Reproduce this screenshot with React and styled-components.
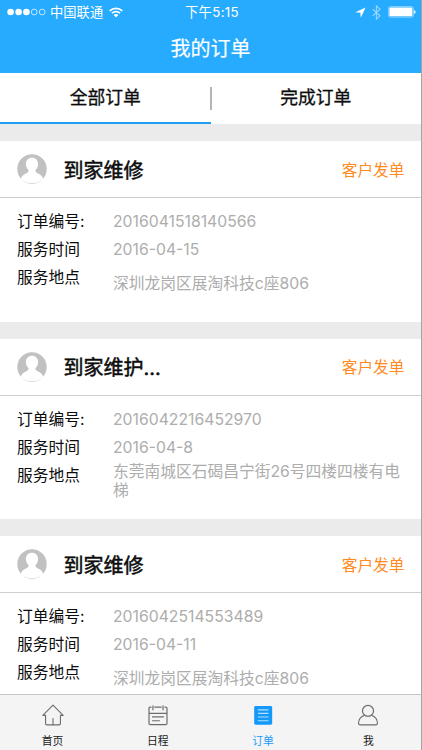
import React from "react";
import styled, { createGlobalStyle } from "styled-components";

const GlobalStyle = createGlobalStyle`
  * {
    box-sizing: border-box;
  }
  body {
    margin: 0;
    overflow: hidden;
    font-family: Inter, "Noto Sans CJK SC", sans-serif;
    color: #0c0c0c;
    background-color: #ebebeb;
  }
`;

const Screen = styled.div`
  display: flex;
  flex-direction: column;
  width: 422px;
  height: 750px;
  overflow: hidden;
  background-color: #ebebeb;
  box-shadow: inset -1px 0 0 #a5a5a5;
`;

const Header = styled.header`
  flex: none;
  width: 421px;
  height: 72.5px;
  color: white;
  background-color: #26abff;
`;

const StatusBar = styled.div`
  display: grid;
  grid-template-columns: 1fr auto 1fr;
  align-items: center;
  height: 24px;
  padding: 0 5px 0 7px;
  font-size: 13.3px;
  line-height: 24px;
`;

const Carrier = styled.div`
  display: flex;
  align-items: center;
`;

const CarrierName = styled.span`
  margin: 0 6px 0 4px;
`;

const Time = styled.span`
  padding-left: 1px;
  letter-spacing: 0.35px;
`;

const Indicators = styled.div`
  display: flex;
  justify-content: flex-end;
  align-items: center;
`;

const PageTitle = styled.h1`
  margin: 0;
  font-size: 20px;
  font-weight: 400;
  line-height: 50px;
  text-align: center;
  -webkit-text-stroke: 0.2px white;
`;

const Tabs = styled.nav`
  display: flex;
  flex: none;
  align-items: center;
  width: 421px;
  height: 51.5px;
  background-color: white;
`;

const Tab = styled.div`
  flex: 1;
  height: 100%;
  border-bottom: 2px solid ${(props) => (props.$active ? "#1f9ef0" : "white")};
  font-size: 17.8px;
  line-height: 49px;
  text-align: center;
  -webkit-text-stroke: 0.3px #0c0c0c;
`;

const TabDivider = styled.span`
  width: 2px;
  height: 23px;
  margin: 0 -1px;
  background-color: #b4b4b4;
`;

const List = styled.main`
  display: flex;
  flex: 1;
  flex-direction: column;
  gap: 17px;
  width: 421px;
  min-height: 0;
  padding-top: 17px;
  overflow: hidden;
`;

const Card = styled.section`
  flex: none;
  height: 180.6px;
  background-color: white;
`;

const CardHeader = styled.div`
  display: flex;
  align-items: center;
  height: 57px;
  padding: 0 16.5px 0 17px;
  border-bottom: 1px solid #cfcfcf;
`;

const CardTitle = styled.h2`
  flex: 1;
  margin: 0 0 0 16.5px;
  font-size: 20px;
  font-weight: 400;
  -webkit-text-stroke: 0.5px #0c0c0c;
`;

const Status = styled.span`
  font-size: 15.7px;
  color: #ff8a1e;
`;

const Fields = styled.div`
  display: grid;
  grid-template-columns: 96px 1fr;
  grid-template-rows: 28px 28px 40px;
  padding: 10px 16px 0 17px;
  font-size: 15.75px;
  line-height: 28px;
`;

const Label = styled.span``;

const Value = styled.span`
  color: #adadad;
`;

const Address = styled.span`
  align-self: center;
  line-height: 18.7px;
  color: #adadad;
`;

const TabBar = styled.footer`
  display: flex;
  flex: none;
  width: 421px;
  height: 56px;
  border-top: 1px solid #c6c6c6;
  background-color: #f4f4f4;
`;

const TabBarItem = styled.div`
  display: flex;
  flex: 1;
  flex-direction: column;
  align-items: center;
  gap: 8px;
  padding-top: 9px;
  font-size: 10.8px;
  line-height: 16px;
  color: ${(props) => (props.$active ? "#1a9dfa" : "#222")};
`;

const SignalDots = () => (
  <svg width="39" height="8" viewBox="0 0 39 8" fill="white">
    <circle cx="3.6" cy="4" r="3.3" />
    <circle cx="11.6" cy="4" r="3.3" />
    <circle cx="19.4" cy="4" r="3.3" />
    <g fill="none" stroke="white" strokeWidth="0.7">
      <circle cx="27.2" cy="4" r="2.9" />
      <circle cx="35.2" cy="4" r="2.9" />
    </g>
  </svg>
);

const WifiIcon = () => (
  <svg width="14" height="11" viewBox="0 0 14 11">
    <g fill="none" stroke="white" strokeWidth="1.6">
      <path d="M0.7 3.9a9 9 0 0 1 12.6 0" />
      <path d="M2.9 6.3a5.8 5.8 0 0 1 8.2 0" />
    </g>
    <path d="M4.6 8.1a3.4 3.4 0 0 1 4.8 0L7 10.6z" fill="white" />
  </svg>
);

const LocationIcon = () => (
  <svg width="11" height="11" viewBox="0 0 11 11" fill="white">
    <path d="M10.6 0.4L0.4 5.3l5 0.4 0.4 5z" />
  </svg>
);

const Bluetooth = styled.svg`
  margin: 0 7px 0 6px;
`;

const BluetoothIcon = () => (
  <Bluetooth
    width="9"
    height="15"
    viewBox="0 0 9 15"
    fill="none"
    stroke="#9ad8ff"
    strokeWidth="1.1"
  >
    <path d="M0.7 4.2l7.3 6.6-3.6 3.3V0.9L8 4.2 0.7 10.8" />
  </Bluetooth>
);

const BatteryIcon = () => (
  <svg width="28" height="12" viewBox="0 0 28 12">
    <rect
      x="0.4"
      y="0.6"
      width="25"
      height="10.6"
      rx="2"
      fill="none"
      stroke="#b5e2ff"
      strokeWidth="0.7"
    />
    <rect x="1.4" y="1.6" width="23" height="8.6" rx="1" fill="white" />
    <path d="M26.2 4v4q1.4-0.6 1.4-2t-1.4-2z" fill="white" />
  </svg>
);

const Avatar = () => (
  <svg width="30" height="30" viewBox="0 0 30 30">
    <circle cx="15" cy="15" r="14.7" fill="#c1c1c1" />
    <path
      d="M15 3.8c-3.7 0-6.1 2.7-6.1 6.3 0 2.6 1 4.6 2.5 6 0.5 1.5-0.3 2.4-1.9 3.1C6.4 20.400 4.300 22.200 3.800 25.200 6.700 28 10.600 29.300 15 29.300s8.300-1.300 11.200-4.100c-0.500-3-2.600-4.800-5.700-6-1.600-0.700-2.400-1.600-1.900-3.100 1.500-1.400 2.500-3.400 2.500-6 0-3.600-2.400-6.300-6.100-6.300z"
      fill="white"
    />
  </svg>
);

const HomeIcon = () => (
  <svg
    width="24"
    height="24"
    viewBox="0 0 24 24"
    fill="none"
    stroke="#6c6c6c"
    strokeWidth="1.2"
    strokeLinejoin="round"
    strokeLinecap="round"
  >
    <path d="M3.9 12.4H0.9L12 1.2l11.1 11.2h-3v9q0 1.4-1.4 1.4H5.3q-1.4 0-1.4-1.4z" />
    <path d="M12 16v6.5" />
  </svg>
);

const ScheduleIcon = () => (
  <svg
    width="24"
    height="24"
    viewBox="0 0 24 24"
    fill="none"
    stroke="#6c6c6c"
    strokeWidth="1.3"
    strokeLinecap="round"
  >
    <path d="M4.4 3.5H3.5q-1.3 0-1.3 1.3v16.4q0 1.3 1.3 1.3h17q1.3 0 1.3-1.3V4.8q0-1.3-1.3-1.3h-0.9M8.5 3.5h7M2.2 10.2h19.6M6.5 2v4.4M17.5 2v4.4M6 14.1h12M6 18.3h7.5" />
  </svg>
);

const OrderIcon = () => (
  <svg width="24" height="24" viewBox="0 0 24 24">
    <rect x="2.4" y="2.2" width="19.6" height="20.5" rx="1.6" fill="#1299fa" />
    <path
      d="M6.4 6.4h11.6M6.4 10.2h11.6M6.4 14.2h11.6M6.4 18.2h11.6"
      stroke="#b5e0ff"
      strokeWidth="1.2"
    />
  </svg>
);

const UserIcon = () => (
  <svg
    width="24"
    height="24"
    viewBox="0 0 24 24"
    fill="none"
    stroke="#6c6c6c"
    strokeWidth="1.3"
    strokeLinejoin="round"
  >
    <circle cx="12" cy="7.5" r="6" />
    <path d="M8.3 12.3C4.3 13.6 1.8 17 1.7 21q0 1.7 1.5 1.7h17.6q1.5 0 1.5-1.7c-0.1-4-2.6-7.4-6.6-8.7" />
  </svg>
);

const orders = [
  {
    title: "到家维修",
    number: "2016041518140566",
    date: "2016-04-15",
    address: "深圳龙岗区展淘科技c座806",
  },
  {
    title: "到家维护...",
    number: "2016042216452970",
    date: "2016-04-8",
    address: "东莞南城区石碣昌宁街26号四楼四楼有电梯",
  },
  {
    title: "到家维修",
    number: "2016042514553489",
    date: "2016-04-11",
    address: "深圳龙岗区展淘科技c座806",
  },
];

const Order = ({ title, number, date, address }) => (
  <Card>
    <CardHeader>
      <Avatar />
      <CardTitle>{title}</CardTitle>
      <Status>客户发单</Status>
    </CardHeader>
    <Fields>
      <Label>订单编号:</Label>
      <Value>{number}</Value>
      <Label>服务时间</Label>
      <Value>{date}</Value>
      <Label>服务地点</Label>
      <Address>{address}</Address>
    </Fields>
  </Card>
);

const App = () => (
  <>
    <GlobalStyle />
    <Screen>
      <Header>
        <StatusBar>
          <Carrier>
            <SignalDots />
            <CarrierName>中国联通</CarrierName>
            <WifiIcon />
          </Carrier>
          <Time>下午5:15</Time>
          <Indicators>
            <LocationIcon />
            <BluetoothIcon />
            <BatteryIcon />
          </Indicators>
        </StatusBar>
        <PageTitle>我的订单</PageTitle>
      </Header>
      <Tabs>
        <Tab $active>全部订单</Tab>
        <TabDivider />
        <Tab>完成订单</Tab>
      </Tabs>
      <List>
        {orders.map((order) => (
          <Order key={order.number} {...order} />
        ))}
      </List>
      <TabBar>
        <TabBarItem>
          <HomeIcon />
          首页
        </TabBarItem>
        <TabBarItem>
          <ScheduleIcon />
          日程
        </TabBarItem>
        <TabBarItem $active>
          <OrderIcon />
          订单
        </TabBarItem>
        <TabBarItem>
          <UserIcon />我
        </TabBarItem>
      </TabBar>
    </Screen>
  </>
);

export default App;
